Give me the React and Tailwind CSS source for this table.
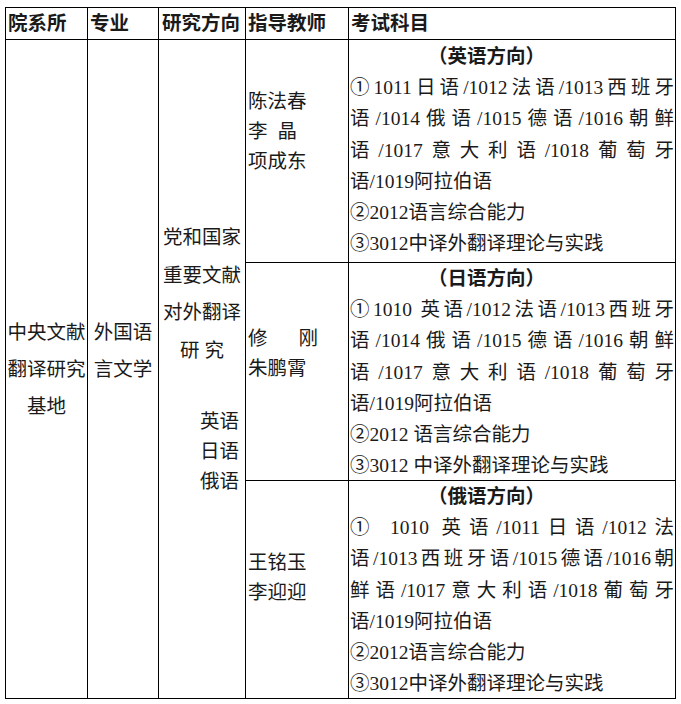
const font = "font-['Liberation_Serif','Noto_Sans_CJK_SC',serif]";

const rows = [
  {
    title: '（英语方向）',
    teacherPad: 'pt-[47px]',
    teachers: [
      '陈法春',
      <>李<span className="ml-[10px]">晶</span></>,
      '项成东',
    ],
    examPad: 'pt-[1px]',
    lines: [
      ['①1011日语/1012法语/1013西班牙', true],
      ['语/1014俄语/1015德语/1016朝鲜', true],
      ['语/1017意大利语/1018葡萄牙', true],
      ['语/1019阿拉伯语', false],
      ['②2012语言综合能力', false],
      ['③3012中译外翻译理论与实践', false],
    ],
  },
  {
    title: '（日语方向）',
    teacherPad: 'pt-[61px]',
    teachers: [
      <>修<span className="ml-[31px]">刚</span></>,
      '朱鹏霄',
    ],
    examPad: 'pt-0',
    lines: [
      ['①1010 英语/1012法语/1013西班牙', true],
      ['语/1014俄语/1015德语/1016朝鲜', true],
      ['语/1017意大利语/1018葡萄牙', true],
      ['语/1019阿拉伯语', false],
      ['②2012 语言综合能力', false],
      ['③3012 中译外翻译理论与实践', false],
    ],
  },
  {
    title: '（俄语方向）',
    teacherPad: 'pt-[67px]',
    teachers: ['王铭玉', '李迎迎'],
    examPad: 'pt-0',
    lines: [
      ['① 1010 英语/1011日语/1012法', true],
      ['语/1013西班牙语/1015德语/1016朝', true],
      ['鲜语/1017意大利语/1018葡萄牙', true],
      ['语/1019阿拉伯语', false],
      ['②2012语言综合能力', false],
      ['③3012中译外翻译理论与实践', false],
    ],
  },
];

const rowStart = ['row-start-2', 'row-start-3', 'row-start-4'];

export default function App() {
  const cell = 'border-r border-b border-black';
  const head = `${cell} flex items-center pl-[2px] font-bold`;

  return (
    <div className={`w-[681px] h-[704px] bg-white text-[#1a1a1a] text-[19.5px] ${font}`}>
      <div className="ml-[5px] pt-[7px]">
        <div className="grid w-[671px] grid-cols-[82px_71px_87px_103px_327px] grid-rows-[32px_223px_218px_218px] border-t border-l border-black">
          <div className={head}>院系所</div>
          <div className={head}>专业</div>
          <div className={`${head} pl-[3px]`}>研究方向</div>
          <div className={head}>指导教师</div>
          <div className={head}>考试科目</div>

          <div className={`${cell} col-start-1 row-start-2 row-span-3 pt-[274px] text-center leading-[37px]`}>
            <div>中央文献</div>
            <div>翻译研究</div>
            <div>基地</div>
          </div>

          <div className={`${cell} col-start-2 row-start-2 row-span-3 pt-[274px] text-center leading-[37px]`}>
            <div>外国语</div>
            <div>言文学</div>
          </div>

          <div className={`${cell} col-start-3 row-start-2 row-span-3 pt-[179px]`}>
            <div className="text-center leading-[37.5px]">
              <div>党和国家</div>
              <div>重要文献</div>
              <div>对外翻译</div>
              <div>研 究</div>
            </div>
            <div className="mt-[38px] pr-[6px] text-right leading-[30px]">
              <div>英语</div>
              <div>日语</div>
              <div>俄语</div>
            </div>
          </div>

          {rows.map((r, i) => (
            <div key={`t${i}`} className={`${cell} col-start-4 ${rowStart[i]} ${r.teacherPad} pl-[2px] leading-[30px]`}>
              {r.teachers.map((t, j) => (
                <div key={j}>{t}</div>
              ))}
            </div>
          ))}

          {rows.map((r, i) => (
            <div key={`e${i}`} className={`${cell} col-start-5 ${rowStart[i]} ${r.examPad} pl-[1px] pr-[1px] leading-[31.2px]`}>
              <div className="pl-[78px] font-bold">{r.title}</div>
              {r.lines.map(([text, justify], j) => (
                <div
                  key={j}
                  className={justify ? 'whitespace-nowrap text-justify [text-align-last:justify]' : 'whitespace-nowrap'}
                >
                  {text}
                </div>
              ))}
            </div>
          ))}
        </div>
      </div>
    </div>
  );
}
